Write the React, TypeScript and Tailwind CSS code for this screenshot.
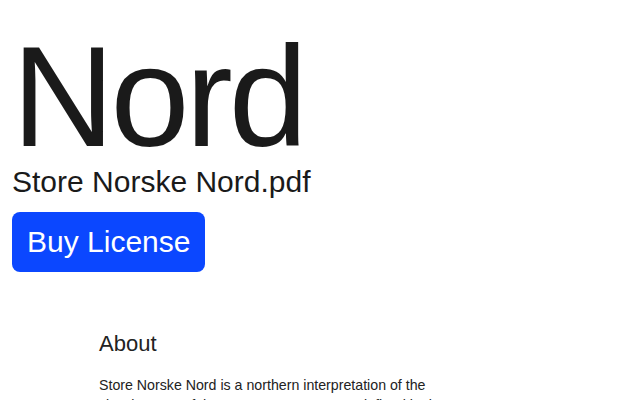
export default function App() {
  return (
    <div className="w-[640px] h-[400px] overflow-hidden bg-white text-[#1a1a1a]" style={{ fontFamily: '"Liberation Sans", Arial, sans-serif' }}>
      <div className="px-[12px] pt-[29px]">
        <h1 className="text-[142px] leading-[136px] tracking-[-4px] font-normal">Nord</h1>
        <div className="text-[30px] leading-[34px]">Store Norske Nord.pdf</div>
        <button className="mt-[13px] h-[60px] px-[15px] rounded-[8px] bg-[#0b47ff] text-white text-[30px] leading-[34px]">Buy License</button>
      </div>
      <div className="pl-[99px] pt-[58px] w-[450px]">
        <h2 className="text-[22px] leading-[28px] text-[#222]">About</h2>
        <p className="mt-[17px] text-[14.2px] leading-[20px] text-[#222]">
          Store Norske Nord is a northern interpretation of the classic types of the post-war grotesques, defined by its mechanical forms.
        </p>
      </div>
    </div>
  );
}
